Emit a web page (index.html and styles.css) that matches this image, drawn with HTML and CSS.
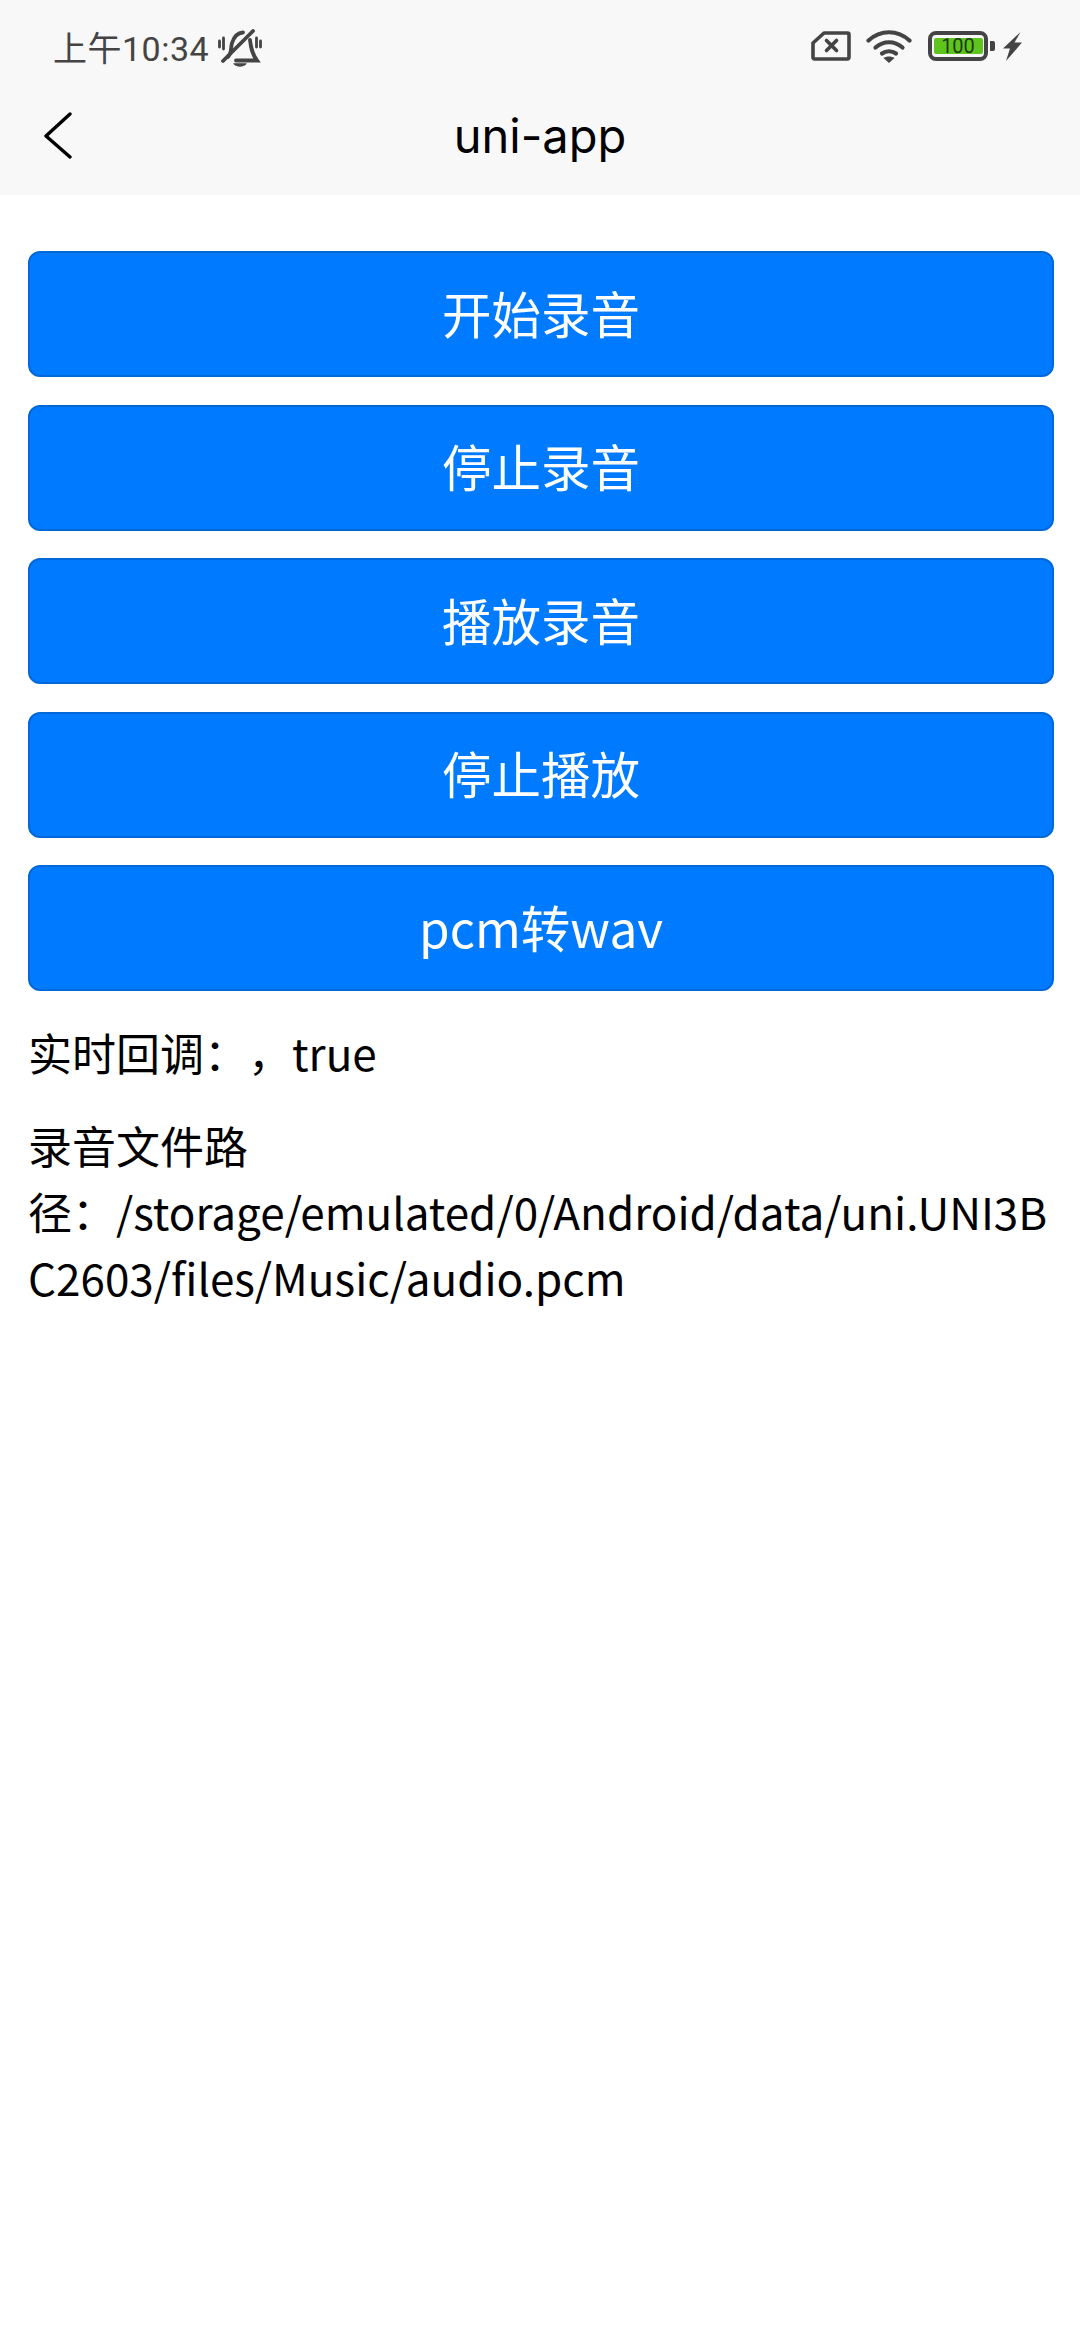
FILE: index.html
```html
<!DOCTYPE html>
<html>
    <head>
        <title>uni-app</title>
        <meta name="viewport" content="width=device-width, initial-scale=1">
        <link rel="stylesheet" href="styles.css">
    </head>
    <body>
        <div class="header">
            <div class="status">
                <div class="status-left">
                    <span class="clock">上午10:34</span>
                    <svg class="icon-bell" width="44" height="38" viewBox="0 0 44 38" fill="none" stroke="#444" stroke-width="3.800" stroke-linecap="round">
                        <path d="M10 28c4-4 2.500-9 4-14C16 7.500 19 4 25 3.500"/>
                        <path d="M32 11c1 8 2 14 7 20.500H18"/>
                        <path d="M5 32 35 2"/>
                        <path d="M1.500 12v6M5.500 9v11M38.500 9v9M42.500 12v6" stroke-width="2.800"/>
                        <path d="M16 35c3 3 9 3 12 0z" fill="#444" stroke-width="1"/>
                    </svg>
                </div>
                <div class="status-right">
                    <svg class="icon-sim" width="40" height="30" viewBox="0 0 40 30" fill="none" stroke="#444" stroke-width="3.600" stroke-linejoin="round" stroke-linecap="round">
                        <path d="M13 2h23.500A1.500 1.500 0 0 1 38 3.500v23a1.500 1.500 0 0 1-1.500 1.500H3.500A1.500 1.500 0 0 1 2 26.500V12z"/>
                        <path d="M15.500 9.500l10 10M25.500 9.500l-10 10"/>
                    </svg>
                    <svg class="icon-wifi" width="46" height="33" viewBox="0 0 46 33" fill="none" stroke="#444" stroke-width="4.200" stroke-linecap="round">
                        <path d="M2.500 10.500c12-11 29-11 41 0"/>
                        <path d="M9.500 17.500c8-7 19-7 27 0"/>
                        <path d="M16 23.500c4-3 10-3 14 0"/>
                        <path d="M23 33l-5.500-5c3-2 8-2 11 0z" fill="#444" stroke="none"/>
                    </svg>
                    <div class="battery">
                        <div class="battery-body">
                            <div class="battery-fill">100</div>
                        </div>
                        <div class="battery-cap"></div>
                    </div>
                    <svg class="icon-bolt" width="19" height="29" viewBox="0 0 19 29">
                        <path d="M17.500 0 0 16.500h7L3 29 19 10.500h-7.500z" fill="#444"/>
                    </svg>
                </div>
            </div>
            <div class="nav">
                <svg class="nav-back" width="30" height="48" viewBox="0 0 30 48" fill="none" stroke="#000" stroke-width="3.400" stroke-linecap="round" stroke-linejoin="round">
                    <path d="M26 2 2 24l24 21"/>
                </svg>
                <span class="nav-title">uni-app</span>
            </div>
        </div>

        <div class="content">
            <button class="btn">开始录音</button>
            <button class="btn">停止录音</button>
            <button class="btn">播放录音</button>
            <button class="btn">停止播放</button>
            <button class="btn">pcm转wav</button>
            <div class="line first">实时回调：，true</div>
            <div class="line path">录音文件路径：/storage/emulated/0/Android/data/uni.UNI3BC2603/files/Music/audio.pcm</div>
        </div>
    </body>
</html>
```

FILE: styles.css
```css
html {
    height: 100%;
    background: white;
}

body {
    margin: 0;
    padding: 0;
    font-family: "Noto Sans CJK SC", "Noto Sans", sans-serif;
    color: #000;
}

.header {
    background-color: #f8f8f8;
    height: 195px;
    display: flex;
    flex-direction: column;
}

.status {
    height: 92px;
    padding: 0 58px 0 53px;
    display: flex;
    align-items: center;
    justify-content: space-between;
    box-sizing: border-box;
}

.status-left,
.status-right {
    display: flex;
    align-items: center;
}

.clock {
    font-family: Roboto, "Noto Sans CJK SC", sans-serif;
    font-size: 34px;
    letter-spacing: 0.500px;
    color: #444;
}

.icon-bell {
    margin: 3px 0 0 9px;
}

.icon-wifi {
    margin-left: 15px;
}

.battery {
    display: flex;
    align-items: center;
    margin-left: 16px;
}

.battery-body {
    width: 49px;
    height: 16px;
    border: 4px solid #444;
    border-radius: 8px;
    padding: 3px 1.500px;
    box-sizing: content-box;
}

.battery-fill {
    height: 100%;
    background-color: #5fc41e;
    border-radius: 2px;
    color: #1d3a10;
    font-family: Roboto, sans-serif;
    font-size: 20px;
    line-height: 16px;
    text-align: center;
}

.battery-cap {
    width: 5px;
    height: 10px;
    margin-left: 2px;
    background-color: #444;
    border-radius: 0 2px 2px 0;
}

.icon-bolt {
    margin-left: 8px;
}

.nav {
    flex: 1;
    display: flex;
    align-items: center;
    justify-content: center;
    position: relative;
    padding-bottom: 16px;
}

.nav-back {
    position: absolute;
    left: 44px;
    top: 20px;
}

.nav-title {
    font-family: Inter, "Noto Sans", sans-serif;
    font-size: 47px;
    color: #000;
}

.content {
    padding: 56px 26px 0 28px;
    display: flex;
    flex-direction: column;
}

.btn {
    height: 126px;
    margin-bottom: 27.500px;
    width: 100%;
    background-color: #007aff;
    border: 2px solid #0068d9;
    border-radius: 12px;
    color: white;
    font-family: "Noto Sans CJK SC", sans-serif;
    font-size: 49.500px;
    padding: 0 0 4px;
}

.line {
    font-size: 44px;
    line-height: 66px;
    font-feature-settings: "chws" 0;
    text-spacing-trim: space-all;
    overflow-wrap: break-word;
}

.path {
    margin-top: 27px;
}
```
